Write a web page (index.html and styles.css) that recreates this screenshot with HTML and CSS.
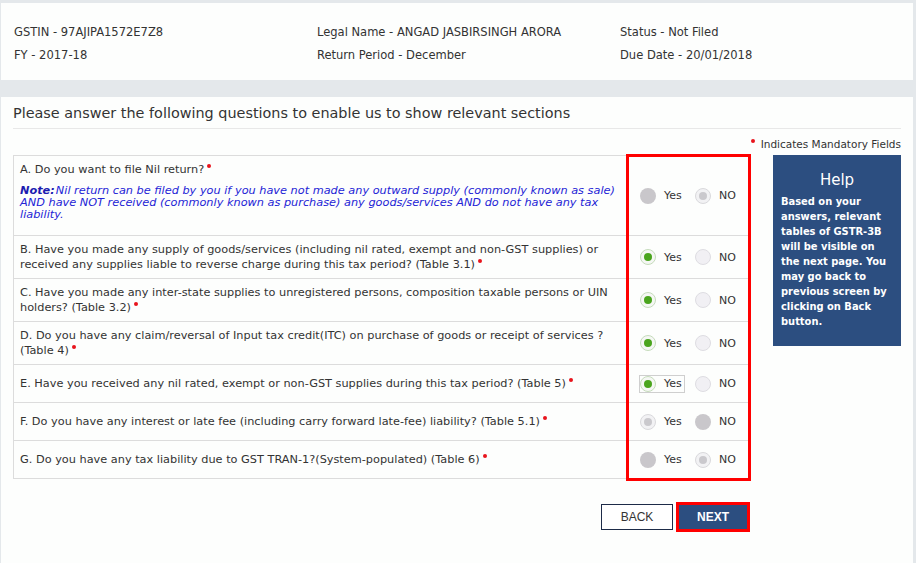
FILE: index.html
```html
<!DOCTYPE html>
<html>
<head>
<meta charset="utf-8">
<link rel="stylesheet" href="styles.css">
</head>
<body>
<div class="top-card">
  <div class="info-grid">
    <div>GSTIN - 97AJIPA1572E7Z8</div>
    <div>Legal Name - ANGAD JASBIRSINGH ARORA</div>
    <div>Status - Not Filed</div>
    <div>FY - 2017-18</div>
    <div>Return Period - December</div>
    <div>Due Date - 20/01/2018</div>
  </div>
</div>
<div class="main-card">
  <h1 class="heading">Please answer the following questions to enable us to show relevant sections</h1>
  <div class="mandatory"><span class="req"></span> Indicates Mandatory Fields</div>
  <div class="content">
    <div class="table-wrap">
      <div class="qtable">
        <div class="row row-a">
          <div class="q">
            <div>A. Do you want to file Nil return?<span class="req"></span></div>
            <p class="note"><b>Note:</b>Nil return can be filed by you if you have not made any outward supply (commonly known as sale) AND have NOT received (commonly known as purchase) any goods/services AND do not have any tax liability.</p>
          </div>
          <div class="opts">
            <span class="opt"><span class="radio r-off-dis"></span>Yes</span>
            <span class="opt"><span class="radio r-on-dis"></span>NO</span>
          </div>
        </div>
        <div class="row">
          <div class="q">B. Have you made any supply of goods/services (including nil rated, exempt and non-GST supplies) or received any supplies liable to reverse charge during this tax period? (Table 3.1)<span class="req"></span></div>
          <div class="opts">
            <span class="opt"><span class="radio r-on"></span>Yes</span>
            <span class="opt"><span class="radio r-off"></span>NO</span>
          </div>
        </div>
        <div class="row">
          <div class="q">C. Have you made any inter-state supplies to unregistered persons, composition taxable persons or UIN holders? (Table 3.2)<span class="req"></span></div>
          <div class="opts">
            <span class="opt"><span class="radio r-on"></span>Yes</span>
            <span class="opt"><span class="radio r-off"></span>NO</span>
          </div>
        </div>
        <div class="row">
          <div class="q">D. Do you have any claim/reversal of Input tax credit(ITC) on purchase of goods or receipt of services ? (Table 4)<span class="req"></span></div>
          <div class="opts">
            <span class="opt"><span class="radio r-on"></span>Yes</span>
            <span class="opt"><span class="radio r-off"></span>NO</span>
          </div>
        </div>
        <div class="row">
          <div class="q">E. Have you received any nil rated, exempt or non-GST supplies during this tax period? (Table 5)<span class="req"></span></div>
          <div class="opts">
            <span class="opt focused"><span class="radio r-on"></span>Yes</span>
            <span class="opt"><span class="radio r-off"></span>NO</span>
          </div>
        </div>
        <div class="row">
          <div class="q">F. Do you have any interest or late fee (including carry forward late-fee) liability? (Table 5.1)<span class="req"></span></div>
          <div class="opts">
            <span class="opt"><span class="radio r-on-dis"></span>Yes</span>
            <span class="opt"><span class="radio r-off-dis"></span>NO</span>
          </div>
        </div>
        <div class="row">
          <div class="q">G. Do you have any tax liability due to GST TRAN-1?(System-populated) (Table 6)<span class="req"></span></div>
          <div class="opts">
            <span class="opt"><span class="radio r-off-dis"></span>Yes</span>
            <span class="opt"><span class="radio r-on-dis"></span>NO</span>
          </div>
        </div>
      </div>
      <div class="highlight"></div>
      <div class="actions">
        <button class="btn btn-back">BACK</button>
        <button class="btn btn-next">NEXT</button>
      </div>
    </div>
    <aside class="help">
      <div class="help-title">Help</div>
      <div class="help-text">Based on your answers, relevant tables of GSTR-3B will be visible on the next page. You may go back to previous screen by clicking on Back button.</div>
    </aside>
  </div>
</div>
</body>
</html>
```

FILE: styles.css
```css
html, body {
  margin: 0;
  padding: 0;
}
body {
  background: #e4e8eb;
  font-family: "DejaVu Sans", Verdana, sans-serif;
  color: #333;
  width: 916px;
  height: 563px;
  overflow: hidden;
}
.top-card {
  background: #fdfefd;
  margin: 3px 3px 0 1px;
  height: 77px;
  box-sizing: border-box;
  padding: 21px 0 0 13px;
}
.info-grid {
  display: grid;
  grid-template-columns: 303px 303px 290px;
  row-gap: 8px;
  font-family: "DejaVu Sans Condensed", "DejaVu Sans", sans-serif;
  font-size: 12.8px;
  line-height: 15px;
  color: #333;
}
.main-card {
  background: #fdfefd;
  margin: 17px 3px 0 1px;
  min-height: 466px;
  padding: 0 12px;
}
.heading {
  margin: 0;
  font-weight: normal;
  font-size: 14.4px;
  line-height: 20px;
  padding: 6px 0 5px;
  border-bottom: 1px solid #e8e8e8;
  color: #333;
}
.mandatory {
  text-align: right;
  font-size: 10.5px;
  line-height: 14px;
  margin-top: 8px;
  height: 18px;
}
.req {
  display: inline-block;
  width: 4px;
  height: 4px;
  border-radius: 50%;
  background: #e8141c;
  margin-left: 3px;
  vertical-align: 5px;
}
.mandatory .req {
  margin: 0 2px 0 0;
}
.content {
  display: flex;
  gap: 23px;
  align-items: flex-start;
}
.table-wrap {
  position: relative;
  width: 737px;
}
.qtable {
  border: 1px solid #dcdcdc;
  border-bottom: none;
}
.row {
  display: flex;
  align-items: center;
  border-bottom: 1px solid #dcdcdc;
  min-height: 37px;
}
.q {
  flex: 0 0 613px;
  box-sizing: border-box;
  padding: 6px 6px;
  font-size: 11.3px;
  line-height: 15px;
}
.row-a {
  align-items: stretch;
}
.row-a .q {
  padding: 6px 6px 14px;
}
.row-a .opts {
  align-self: center;
}
.note {
  margin: 8px 0 0;
  color: #2424d6;
  font-style: italic;
  font-size: 11.3px;
  line-height: 12px;
}
.note b {
  color: #1c1cb0;
  margin-right: 1px;
}
.opts {
  flex: 1;
  display: flex;
  align-items: center;
  padding-left: 12px;
  font-size: 11px;
}
.opt {
  display: inline-flex;
  align-items: center;
  gap: 8px;
  border: 1px solid transparent;
  height: 16px;
  width: 44px;
  box-sizing: content-box;
}
.opt + .opt {
  margin-left: 9px;
}
.opt.focused {
  border-color: #cfcfcf;
}
.radio {
  width: 16px;
  height: 16px;
  border-radius: 50%;
  box-sizing: border-box;
  position: relative;
  flex: 0 0 16px;
}
.radio::after {
  content: "";
  position: absolute;
  left: 50%;
  top: 50%;
  width: 8px;
  height: 8px;
  margin: -4px 0 0 -4px;
  border-radius: 50%;
}
.r-off-dis {
  background: #c9c7cb;
}
.r-on-dis {
  background: #f2f2f4;
  border: 1px solid #d9d9dc;
}
.r-on-dis::after {
  background: #cac9cd;
}
.r-on {
  background: #f5f7f4;
  border: 1px solid #c6dcbc;
}
.r-on::after {
  background: #4aa51d;
}
.r-off {
  background: #f1f0f4;
  border: 1px solid #dedde2;
}
.highlight {
  position: absolute;
  left: 613px;
  top: -1px;
  width: 125px;
  height: 327px;
  border: 3px solid #ff0000;
  box-sizing: border-box;
  pointer-events: none;
}
.actions {
  display: flex;
  justify-content: flex-end;
  align-items: center;
  gap: 3px;
  margin-top: 23px;
}
.btn {
  font-family: "Liberation Sans", Arial, sans-serif;
  font-size: 12px;
  cursor: pointer;
  box-sizing: border-box;
  padding: 0;
}
.btn-back {
  width: 72px;
  height: 26px;
  background: #fff;
  border: 1px solid #1d2b48;
  color: #333;
}
.btn-next {
  width: 74px;
  height: 30px;
  background: #2c4e80;
  border: 3px solid #ff0000;
  color: #fff;
  font-weight: bold;
}
.help {
  width: 128px;
  height: 191px;
  box-sizing: border-box;
  background: #2c4e80;
  color: #fff;
  padding: 15px 8px 0 8px;
}
.help-title {
  text-align: center;
  font-size: 15px;
  line-height: 20px;
}
.help-text {
  margin-top: 4px;
  font-family: "DejaVu Sans Condensed", "DejaVu Sans", sans-serif;
  font-weight: bold;
  font-size: 11px;
  line-height: 15px;
}
```
